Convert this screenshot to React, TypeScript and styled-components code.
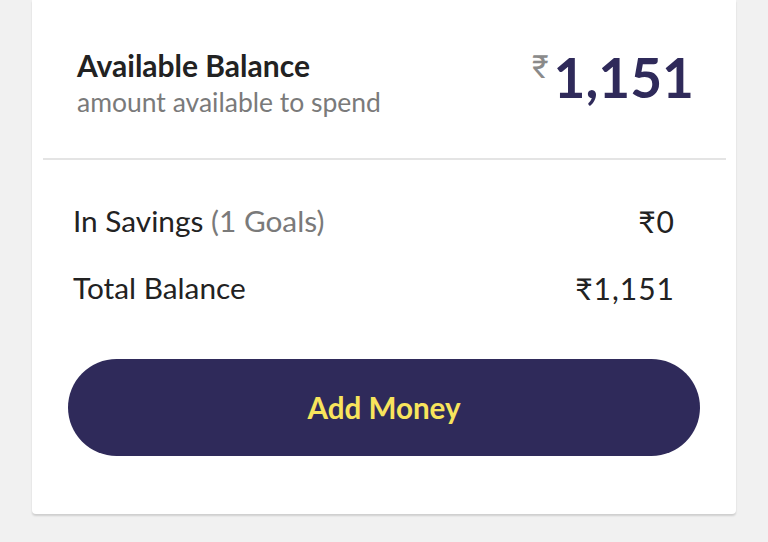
import * as React from 'react';
import styled, { createGlobalStyle } from 'styled-components';

const colors = {
    page: '#f1f1f1',
    card: '#ffffff',
    ink: '#222222',
    muted: '#7a7a7a',
    navy: '#2f2a5a',
    yellow: '#f8e45c',
    line: '#e4e4e4',
};

const GlobalStyle = createGlobalStyle`
    html, body {
        margin: 0;
        padding: 0;
        background: ${colors.page};
        font-family: Lato, "Noto Sans", sans-serif;
    }
`;

const Page = styled.div`
    width: 768px;
    height: 542px;
    padding: 0 32px;
    box-sizing: border-box;
    overflow: hidden;
`;

const Card = styled.div`
    background-color: ${colors.card};
    border-radius: 0 0 4px 4px;
    box-shadow: 0 2px 2px rgba(0, 0, 0, 0.14);
    padding-bottom: 58px;
`;

const Header = styled.div`
    display: flex;
    justify-content: space-between;
    align-items: flex-start;
    padding: 47px 42px 37px 45px;
`;

const Title = styled.div`
    font-size: 30px;
    font-weight: 700;
    color: ${colors.ink};
    line-height: 36px;
`;

const Subtitle = styled.div`
    font-size: 26.5px;
    color: ${colors.muted};
    line-height: 38px;
`;

const Amount = styled.div`
    display: flex;
    align-items: flex-start;
    color: ${colors.navy};
    font-size: 55px;
    font-weight: 700;
    line-height: 58px;
    margin-top: 1px;
`;

const Currency = styled.span`
    font-family: Roboto, "Noto Sans", sans-serif;
    font-weight: 400;
    font-size: 32px;
    line-height: 32px;
    color: #8a8a8a;
    margin-top: 3px;
    margin-right: 5px;
`;

const Divider = styled.hr`
    border: none;
    height: 2px;
    background: ${colors.line};
    margin: 0 10px 0 11px;
`;

const Rows = styled.div`
    display: flex;
    flex-direction: column;
    gap: 33px;
    padding: 44px 61px 0 41px;
`;

const Row = styled.div`
    display: flex;
    justify-content: space-between;
    align-items: center;
    font-size: 29.8px;
    line-height: 34px;
    color: ${colors.ink};
`;

const Note = styled.span`
    color: ${colors.muted};
`;

const Value = styled.span`
    font-size: 30px;
    letter-spacing: 1px;
`;

const Button = styled.button`
    display: block;
    width: 632px;
    height: 97px;
    margin: 54px 0 0 36px;
    border: none;
    border-radius: 49px;
    background: ${colors.navy};
    color: ${colors.yellow};
    font-family: Lato, "Noto Sans", sans-serif;
    font-size: 29.6px;
    font-weight: 700;
    cursor: pointer;
`;

const App: React.FC = () => {
    return (
        <Page>
            <GlobalStyle />
            <Card>
                <Header>
                    <div>
                        <Title>Available Balance</Title>
                        <Subtitle>amount available to spend</Subtitle>
                    </div>
                    <Amount>
                        <Currency>₹</Currency>
                        1,151
                    </Amount>
                </Header>
                <Divider />
                <Rows>
                    <Row>
                        <span>In Savings <Note>(1 Goals)</Note></span>
                        <Value>₹0</Value>
                    </Row>
                    <Row>
                        <span>Total Balance</span>
                        <Value>₹1,151</Value>
                    </Row>
                </Rows>
                <Button>Add Money</Button>
            </Card>
        </Page>
    );
};

export default App;
